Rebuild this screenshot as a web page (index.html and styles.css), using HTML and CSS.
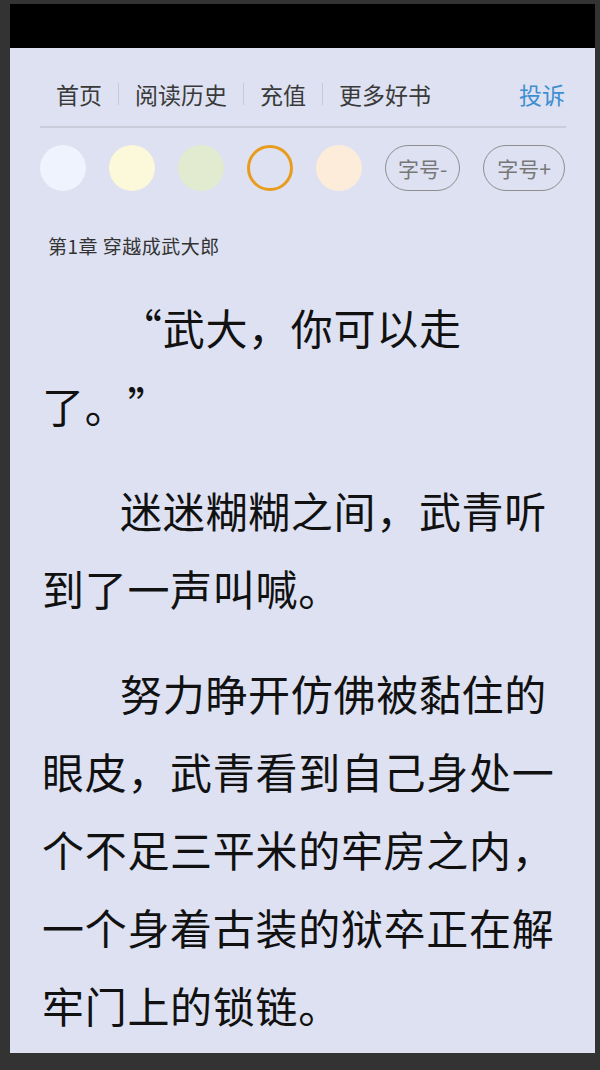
FILE: index.html
```html
<!DOCTYPE html>
<html lang="zh-CN">
<head>
    <meta charset="UTF-8">
    <meta name="viewport" content="width=device-width, initial-scale=1.0">
    <title>第1章 穿越成武大郎</title>
    <link rel="stylesheet" href="styles.css">
</head>
<body>
    <div class="frame">
        <div class="status-bar"></div>

        <div class="reader">
            <!-- Top links -->
            <nav class="top-nav">
                <a href="#">首页</a>
                <span class="sep"></span>
                <a href="#">阅读历史</a>
                <span class="sep"></span>
                <a href="#">充值</a>
                <span class="sep"></span>
                <a href="#">更多好书</a>
                <a href="#" class="report">投诉</a>
            </nav>

            <!-- Background colours and font size -->
            <div class="toolbar">
                <span class="swatch swatch-white"></span>
                <span class="swatch swatch-yellow"></span>
                <span class="swatch swatch-green"></span>
                <span class="swatch swatch-active"></span>
                <span class="swatch swatch-peach"></span>
                <button class="font-btn">字号-</button>
                <button class="font-btn wide">字号+</button>
            </div>

            <h2 class="chapter-title">第1章 穿越成武大郎</h2>

            <div class="chapter-body">
                <p>“武大，你可以走了。”</p>
                <p>迷迷糊糊之间，武青听到了一声叫喊。</p>
                <p>努力睁开仿佛被黏住的眼皮，武青看到自己身处一个不足三平米的牢房之内，一个身着古装的狱卒正在解牢门上的锁链。</p>
            </div>
        </div>
    </div>
</body>
</html>
```

FILE: styles.css
```css
body {
    margin: 0;
    padding: 0;
    background-color: #333;
    font-family: "Noto Sans CJK SC", "Liberation Sans", sans-serif;
}
.frame {
    width: 585px;
    margin: 4px 0 0 10px;
}
.status-bar {
    height: 44px;
    background-color: #000;
}
.reader {
    height: 1005px;
    overflow: hidden;
    padding: 0 29px 0 30px;
    background-color: #dde1f1;
}
.top-nav {
    display: flex;
    align-items: center;
    padding: 24px 1px 10px 16px;
    line-height: 44px;
    font-size: 23px;
    border-bottom: 2px solid #c9cdda;
}
.top-nav a {
    color: #3a3a3a;
    text-decoration: none;
}
.top-nav .report {
    margin-left: auto;
    color: #3d8fd1;
}
.sep {
    width: 1px;
    height: 22px;
    margin: 0 16px;
    background-color: #c6cad6;
}
.toolbar {
    display: flex;
    align-items: center;
    gap: 23px;
    margin-top: 17px;
}
.swatch {
    flex-shrink: 0;
    width: 46px;
    height: 46px;
    border-radius: 50%;
    box-sizing: border-box;
}
.swatch-white {
    background-color: #eef3fd;
}
.swatch-yellow {
    background-color: #fcf8da;
}
.swatch-green {
    background-color: #e2ebd0;
}
.swatch-active {
    border: 3px solid #e99c1c;
}
.swatch-peach {
    background-color: #fdecda;
}
.font-btn {
    flex-shrink: 0;
    height: 46px;
    padding: 0 12px;
    white-space: nowrap;
    font-family: inherit;
    font-size: 21px;
    color: #777;
    background: none;
    border: 1px solid #8e8e8e;
    border-radius: 23px;
}
.font-btn.wide {
    padding: 0 13px;
}
.chapter-title {
    margin: 45px 0 0 8px;
    font-size: 19px;
    font-weight: normal;
    letter-spacing: 0.5px;
    line-height: 20px;
    color: #333;
}
.chapter-body {
    margin: 32px 0 0 2px;
    font-size: 42px;
    letter-spacing: 0.7px;
    line-height: 78px;
    color: #111;
    text-spacing-trim: space-all;
}
.chapter-body p {
    margin: 0 0 27px;
    text-indent: 78px;
}
```
